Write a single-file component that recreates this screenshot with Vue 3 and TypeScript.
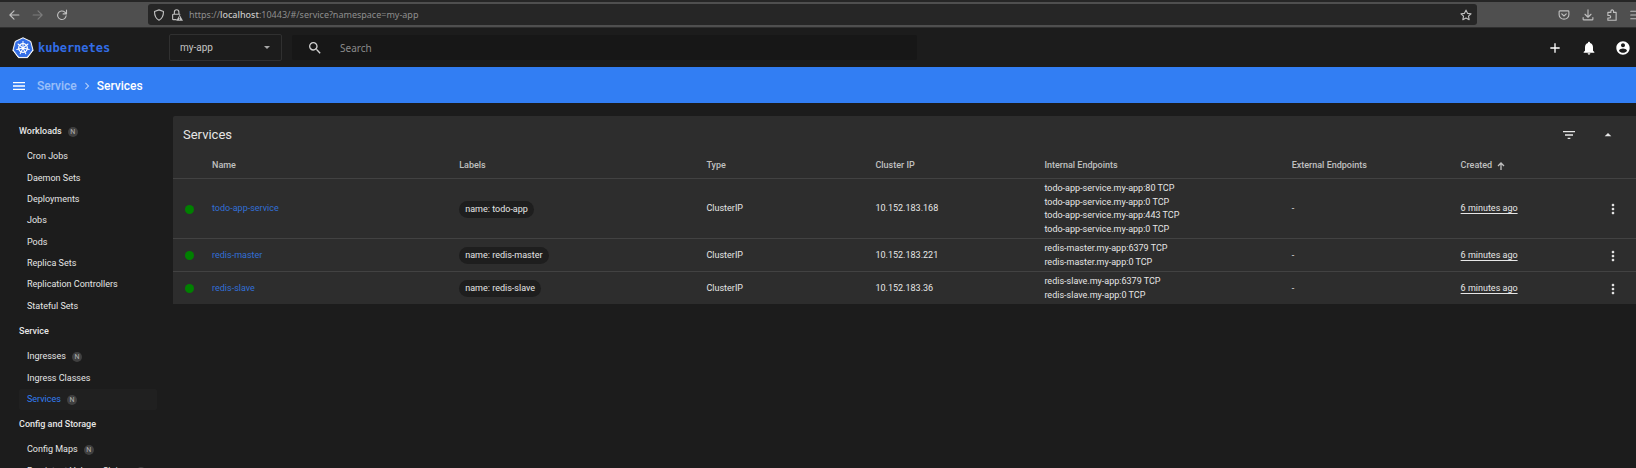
<script setup lang="ts">
import { ref } from 'vue'

interface NavItem {
  label: string
  namespaced?: boolean
}

interface NavGroup extends NavItem {
  items: NavItem[]
}

interface Service {
  name: string
  label: string
  type: string
  clusterIp: string
  internal: string[]
  external: string
  created: string
}

const groups: NavGroup[] = [
  {
    label: 'Workloads',
    namespaced: true,
    items: [
      { label: 'Cron Jobs' },
      { label: 'Daemon Sets' },
      { label: 'Deployments' },
      { label: 'Jobs' },
      { label: 'Pods' },
      { label: 'Replica Sets' },
      { label: 'Replication Controllers' },
      { label: 'Stateful Sets' },
    ],
  },
  {
    label: 'Service',
    items: [
      { label: 'Ingresses', namespaced: true },
      { label: 'Ingress Classes' },
      { label: 'Services', namespaced: true },
    ],
  },
  {
    label: 'Config and Storage',
    items: [
      { label: 'Config Maps', namespaced: true },
      { label: 'Persistent Volume Claims', namespaced: true },
    ],
  },
]

const services: Service[] = [
  {
    name: 'todo-app-service',
    label: 'name: todo-app',
    type: 'ClusterIP',
    clusterIp: '10.152.183.168',
    internal: [
      'todo-app-service.my-app:80 TCP',
      'todo-app-service.my-app:0 TCP',
      'todo-app-service.my-app:443 TCP',
      'todo-app-service.my-app:0 TCP',
    ],
    external: '-',
    created: '6 minutes ago',
  },
  {
    name: 'redis-master',
    label: 'name: redis-master',
    type: 'ClusterIP',
    clusterIp: '10.152.183.221',
    internal: ['redis-master.my-app:6379 TCP', 'redis-master.my-app:0 TCP'],
    external: '-',
    created: '6 minutes ago',
  },
  {
    name: 'redis-slave',
    label: 'name: redis-slave',
    type: 'ClusterIP',
    clusterIp: '10.152.183.36',
    internal: ['redis-slave.my-app:6379 TCP', 'redis-slave.my-app:0 TCP'],
    external: '-',
    created: '6 minutes ago',
  },
]

const active = ref('Services')
const namespace = ref('my-app')
const query = ref('')
const spokes = [0, 1, 2, 3, 4, 5, 6].map((i) => {
  const a = (i * 2 * Math.PI) / 7 - Math.PI / 2
  return { x: 12 + 7 * Math.cos(a), y: 12 + 7 * Math.sin(a) }
})
</script>

<template>
  <div class="window">
    <div class="browser">
      <div class="history">
        <button class="icon" aria-label="Back">
          <svg width="12" height="12" viewBox="0 0 16 16"><path class="line" d="M14.500 8H2.500M8 2.500 2.500 8 8 13.500" /></svg>
        </button>
        <button class="icon dim" aria-label="Forward">
          <svg width="12" height="12" viewBox="0 0 16 16"><path class="line" d="M1.500 8h12M8 2.500 13.500 8 8 13.500" /></svg>
        </button>
        <button class="icon" aria-label="Reload">
          <svg width="12" height="12" viewBox="0 0 16 16"><path class="line" d="M13.500 9A5.700 5.700 0 1 1 11.800 4.200L13.500 6M14 1.500V6.500H9.500" /></svg>
        </button>
      </div>
      <div class="address">
        <svg width="12" height="12" viewBox="0 0 16 16"><path class="line" d="M8 1.200 14 3.400C14 9 12.300 12.800 8 15 3.700 12.800 2 9 2 3.400Z" /></svg>
        <svg width="12" height="12" viewBox="0 0 16 16">
          <path class="line" d="M4.500 7V4a3 3 0 0 1 6 0v3M7 14.200H3.200a1 1 0 0 1-1-1V8a1 1 0 0 1 1-1h8.600" />
          <path fill="currentColor" fill-rule="evenodd" d="M11.500 7.500 16 15.500H7ZM11 10v2.600h1V10ZM11 13.400v1h1v-1Z" />
        </svg>
        <span class="url">https://<b>localhost</b>:10443/#/service?namespace=my-app</span>
        <button class="icon" aria-label="Bookmark this page">
          <svg width="12" height="12" viewBox="0 0 16 16"><path class="line" d="m8 1.500 2 4.300 4.700.6-3.400 3.200.9 4.700L8 12l-4.200 2.300.9-4.700L1.300 6.400 6 5.800Z" /></svg>
        </button>
      </div>
      <div class="tools">
        <button class="icon" aria-label="Save to Pocket">
          <svg width="12" height="12" viewBox="0 0 16 16"><path class="line" d="M2.500 2.500h11a1 1 0 0 1 1 1V7.500a6.500 6 0 0 1-13 0V3.500a1 1 0 0 1 1-1ZM5 6.500l3 2.800 3-2.800" /></svg>
        </button>
        <button class="icon" aria-label="Downloads">
          <svg width="12" height="12" viewBox="0 0 16 16"><path class="line" d="M8 1v9.500M4 7l4 4 4-4M1.500 11.500v2a1 1 0 0 0 1 1h11a1 1 0 0 0 1-1v-2" /></svg>
        </button>
        <button class="icon" aria-label="Extensions">
          <svg width="12" height="12" viewBox="0 0 16 16"><path class="line" d="M2.500 7V4.500h4V3a1.800 1.800 0 0 1 3.600 0v1.500h3.400v10.500H2.500v-3h2a1.700 1.700 0 0 0 0-3.400h-2Z" /></svg>
        </button>
        <button class="icon" aria-label="Application menu">
          <svg width="12" height="12" viewBox="0 0 16 16"><path class="line" d="M1 3h14M1 8h14M1 13h14" /></svg>
        </button>
      </div>
    </div>

    <header class="header">
      <a class="brand" href="#">
        <svg width="22" height="22" viewBox="0 0 24 24">
          <path fill="#fff" d="M12 .8 20.500 4.800 23 14.500 17 22.500H7L1 14.500 3.500 4.800Z" stroke="#fff" stroke-linejoin="round" />
          <path fill="#326de6" stroke="#326de6" stroke-linejoin="round" d="M12 2 19.600 5.600 21.700 14.200 16.400 21.300H7.600L2.300 14.200 4.400 5.600Z" />
          <g fill="none" stroke="#fff">
            <circle cx="12" cy="12" r="4.700" stroke-width="1.400" />
            <path v-for="(s, i) in spokes" :key="i" :d="`M12 12L${s.x} ${s.y}`" stroke-width="1.100" stroke-linecap="round" />
          </g>
          <circle cx="12" cy="12" r="1.400" fill="#fff" />
        </svg>
        <span>kubernetes</span>
      </a>
      <div class="namespace">
        <select v-model="namespace" aria-label="Namespace">
          <option>my-app</option>
        </select>
        <svg width="6" height="3" viewBox="0 0 6 3"><path fill="currentColor" d="M0 0h6L3 3Z" /></svg>
      </div>
      <label class="search">
        <svg width="16" height="16" viewBox="0 0 24 24"><path fill="currentColor" d="M15.500 14h-.79l-.28-.27A6.470 6.470 0 0 0 16 9.500 6.500 6.500 0 1 0 9.500 16c1.610 0 3.090-.59 4.230-1.570l.27.28v.79l5 4.990L20.490 19zm-6 0C7.010 14 5 11.990 5 9.500S7.010 5 9.500 5 14 7.010 14 9.500 11.990 14 9.500 14" /></svg>
        <input v-model="query" type="text" placeholder="Search" aria-label="Search" />
      </label>
      <div class="actions">
        <button class="icon" aria-label="Create new resource">
          <svg width="16" height="16" viewBox="0 0 24 24"><path fill="currentColor" d="M19 13h-6v6h-2v-6H5v-2h6V5h2v6h6z" /></svg>
        </button>
        <button class="icon" aria-label="Notifications">
          <svg width="16" height="16" viewBox="0 0 24 24"><path fill="currentColor" d="M12 22c1.100 0 2-.9 2-2h-4c0 1.100.89 2 2 2m6-6v-5c0-3.070-1.640-5.640-4.500-6.320V4c0-.83-.67-1.500-1.500-1.500s-1.500.67-1.500 1.500v.68C7.630 5.360 6 7.920 6 11v5l-2 2v1h16v-1z" /></svg>
        </button>
        <button class="icon" aria-label="Account">
          <svg width="16" height="16" viewBox="0 0 24 24"><path fill="currentColor" d="M12 2C6.480 2 2 6.480 2 12s4.480 10 10 10 10-4.480 10-10S17.520 2 12 2m0 3c1.660 0 3 1.340 3 3s-1.340 3-3 3-3-1.340-3-3 1.340-3 3-3m0 14.200c-2.500 0-4.710-1.280-6-3.220.03-1.990 4-3.080 6-3.080 1.990 0 5.970 1.090 6 3.080-1.290 1.940-3.500 3.220-6 3.220" /></svg>
        </button>
      </div>
    </header>

    <div class="crumbs">
      <button class="icon" aria-label="Toggle navigation">
        <svg width="16" height="16" viewBox="0 0 24 24"><path fill="currentColor" d="M3 18h18v-2H3zm0-5h18v-2H3zm0-7v2h18V6z" /></svg>
      </button>
      <a href="#">Service</a>
      <svg width="14" height="14" viewBox="0 0 24 24"><path fill="currentColor" d="M10 6 8.590 7.410 13.170 12l-4.580 4.590L10 18l6-6z" /></svg>
      <span>Services</span>
    </div>

    <div class="body">
      <nav class="sidebar">
        <template v-for="group in groups" :key="group.label">
          <a class="group" href="#">{{ group.label }}<i v-if="group.namespaced" class="tag">N</i></a>
          <ul>
            <li v-for="item in group.items" :key="item.label">
              <a href="#" :class="{ active: item.label === active }" @click.prevent="active = item.label">
                {{ item.label }}<i v-if="item.namespaced" class="tag">N</i>
              </a>
            </li>
          </ul>
        </template>
      </nav>

      <main class="card">
        <div class="title">
          <h1>Services</h1>
          <button class="icon" aria-label="Filter">
            <svg width="16" height="16" viewBox="0 0 24 24"><path fill="currentColor" d="M10 18h4v-2h-4zM3 6v2h18V6zm3 7h12v-2H6z" /></svg>
          </button>
          <button class="icon" aria-label="Collapse">
            <svg width="16" height="16" viewBox="0 0 24 24"><path fill="currentColor" d="m7 14 5-5 5 5z" /></svg>
          </button>
        </div>
        <table>
          <colgroup>
            <col class="c-status" />
            <col class="c-wide" />
            <col class="c-wide" />
            <col class="c-mid" />
            <col class="c-mid" />
            <col class="c-wide" />
            <col class="c-mid" />
            <col />
            <col class="c-menu" />
          </colgroup>
          <thead>
            <tr>
              <th></th>
              <th>Name</th>
              <th>Labels</th>
              <th>Type</th>
              <th>Cluster IP</th>
              <th>Internal Endpoints</th>
              <th>External Endpoints</th>
              <th>
                <button class="sort">
                  Created
                  <svg width="8" height="8" viewBox="0 0 8 8"><path fill="none" stroke="currentColor" stroke-width="1.300" d="M4 8V1M1 4l3-3 3 3" /></svg>
                </button>
              </th>
              <th></th>
            </tr>
          </thead>
          <tbody>
            <tr v-for="s in services" :key="s.name">
              <td><span class="dot"></span></td>
              <td><a href="#">{{ s.name }}</a></td>
              <td><span class="chip">{{ s.label }}</span></td>
              <td>{{ s.type }}</td>
              <td>{{ s.clusterIp }}</td>
              <td><div v-for="(e, i) in s.internal" :key="i">{{ e }}</div></td>
              <td>{{ s.external }}</td>
              <td><span class="time">{{ s.created }}</span></td>
              <td>
                <button class="icon" aria-label="Actions">
                  <svg width="16" height="16" viewBox="0 0 24 24"><path fill="currentColor" d="M12 8c1.100 0 2-.9 2-2s-.9-2-2-2-2 .9-2 2 .9 2 2 2m0 2c-1.100 0-2 .9-2 2s.9 2 2 2 2-.9 2-2-.9-2-2-2m0 6c-1.100 0-2 .9-2 2s.9 2 2 2 2-.9 2-2-.9-2-2-2" /></svg>
                </button>
              </td>
            </tr>
          </tbody>
        </table>
      </main>
    </div>
  </div>
</template>

<style>
body {
  background: #1c1c1c;
}
</style>

<style scoped>
.window {
  display: flex;
  flex-direction: column;
  height: 100vh;
  overflow: hidden;
  background: #1c1c1c;
  color: #e6e6e6;
  font-family: Roboto, sans-serif;
  font-size: 9px;
  line-height: 1.5;
}

a {
  color: inherit;
  text-decoration: none;
}

button {
  padding: 0;
  border: 0;
  background: none;
  color: inherit;
  font: inherit;
  cursor: pointer;
}

svg {
  display: block;
  flex: none;
}

.icon {
  display: flex;
  flex: none;
}

.dim {
  opacity: 0.4;
}

.line {
  fill: none;
  stroke: currentColor;
  stroke-width: 1.5;
  stroke-linejoin: round;
  stroke-linecap: round;
}

.browser {
  display: flex;
  flex: none;
  align-items: center;
  box-sizing: border-box;
  height: 28px;
  border-top: 2px solid #262626;
  border-bottom: 1px solid #2f2f2f;
  background: #4f4f4f;
  color: #c0c0c0;
}

.history {
  display: flex;
  gap: 12px;
  width: 140px;
  padding-left: 8px;
}

.address {
  display: flex;
  flex: 1;
  align-items: center;
  gap: 6px;
  height: 21px;
  padding: 0 5px;
  border-radius: 3px;
  background: #262626;
}

.url {
  flex: 1;
  color: #8e8e8e;
  font-family: "Noto Sans", sans-serif;
  font-size: 9px;
}

.url b {
  color: #c8c8c8;
  font-weight: 500;
}

.tools {
  display: flex;
  gap: 12px;
  width: 78px;
  padding-left: 81px;
  overflow: hidden;
}

.header {
  display: flex;
  flex: none;
  align-items: center;
  height: 39px;
}

.brand {
  display: flex;
  align-items: center;
  gap: 4px;
  width: 157px;
  padding-left: 12px;
  color: #326de6;
  font-family: "DejaVu Sans Mono", monospace;
  font-size: 12px;
  font-weight: 700;
}

.namespace {
  display: flex;
  align-items: center;
  box-sizing: border-box;
  width: 113px;
  height: 27px;
  padding-right: 11px;
  border: 1px solid #303030;
  border-radius: 2px;
  color: #a8a8a8;
}

.namespace select {
  flex: 1;
  height: 25px;
  padding: 0 0 0 10px;
  border: 0;
  background: none;
  color: #c4c4c4;
  font-family: inherit;
  font-size: 10px;
  appearance: none;
}

.search {
  display: flex;
  align-items: center;
  gap: 17px;
  box-sizing: border-box;
  width: 38.2%;
  height: 25px;
  margin-left: 10px;
  padding-left: 15px;
  border-radius: 2px;
  background: #171717;
  color: #d0d0d0;
}

.search input {
  flex: 1;
  padding: 0;
  border: 0;
  background: none;
  color: #e0e0e0;
  font-family: "Noto Sans", sans-serif;
  font-size: 10px;
  outline: 0;
}

.search input::placeholder {
  color: #8a8a8a;
  opacity: 1;
}

.actions {
  display: flex;
  gap: 18px;
  margin-left: auto;
  padding: 1px 5px 0 0;
  color: #fff;
}

.crumbs {
  display: flex;
  flex: none;
  align-items: center;
  box-sizing: border-box;
  height: 36px;
  padding: 1px 0 0 11px;
  background: #327ef3;
  color: #fff;
  font-size: 12px;
  font-weight: 500;
}

.crumbs a {
  margin-left: 10px;
  opacity: 0.5;
}

.crumbs > svg {
  margin: 0 3px;
  opacity: 0.6;
}

.body {
  display: flex;
  flex: 1;
  min-height: 0;
}

.sidebar {
  flex: none;
  box-sizing: border-box;
  width: 173px;
  padding: 14px 16px 0 19px;
  overflow: hidden;
}

.sidebar ul {
  margin: 0;
  padding: 0;
  list-style: none;
}

.sidebar a {
  display: flex;
  align-items: center;
  white-space: nowrap;
}

.sidebar .group {
  height: 29px;
  font-weight: 500;
}

.sidebar li {
  display: flex;
  height: 21px;
}

.sidebar li:nth-child(3n + 1) {
  height: 22px;
}

.sidebar li a {
  flex: 1;
  padding-left: 8px;
  border-radius: 2px;
}

.sidebar .active {
  background: #202020;
  color: #327ef3;
}

.tag {
  width: 10px;
  height: 10px;
  margin-left: 6px;
  border-radius: 50%;
  background: #404040;
  color: #b0b0b0;
  font-size: 7px;
  font-style: normal;
  font-weight: 400;
  line-height: 10px;
  text-align: center;
}

.card {
  flex: 1;
  align-self: flex-start;
  min-width: 0;
  margin-top: 13px;
  border-radius: 2px 0 0 0;
  background: #2d2d2d;
}

.title {
  display: flex;
  align-items: center;
  gap: 23px;
  height: 37px;
  padding: 0 20px 0 10px;
}

h1 {
  flex: 1;
  margin: 0;
  font-size: 13px;
  font-weight: 400;
}

table {
  width: 100%;
  border-spacing: 0;
  table-layout: fixed;
}

.c-status {
  width: 39px;
}

.c-wide {
  width: 16.9%;
}

.c-mid {
  width: 11.55%;
}

.c-menu {
  width: 31px;
}

th {
  box-sizing: border-box;
  height: 25px;
  padding: 0;
  color: #c0c0c0;
  font-weight: 500;
  text-align: left;
}

.sort {
  display: flex;
  align-items: center;
  gap: 5px;
}

td {
  padding: 3px 0 2px;
  border-top: 1px solid #424242;
}

td a {
  color: #326fd6;
}

.dot {
  display: block;
  width: 9px;
  height: 9px;
  margin-left: 12px;
  border-radius: 50%;
  background: #008000;
}

.chip {
  display: inline-block;
  height: 17px;
  padding: 0 6px;
  border-radius: 9px;
  background: #1e1e1e;
  line-height: 17px;
}

.time {
  text-decoration: underline;
  text-underline-offset: 2px;
}
</style>
